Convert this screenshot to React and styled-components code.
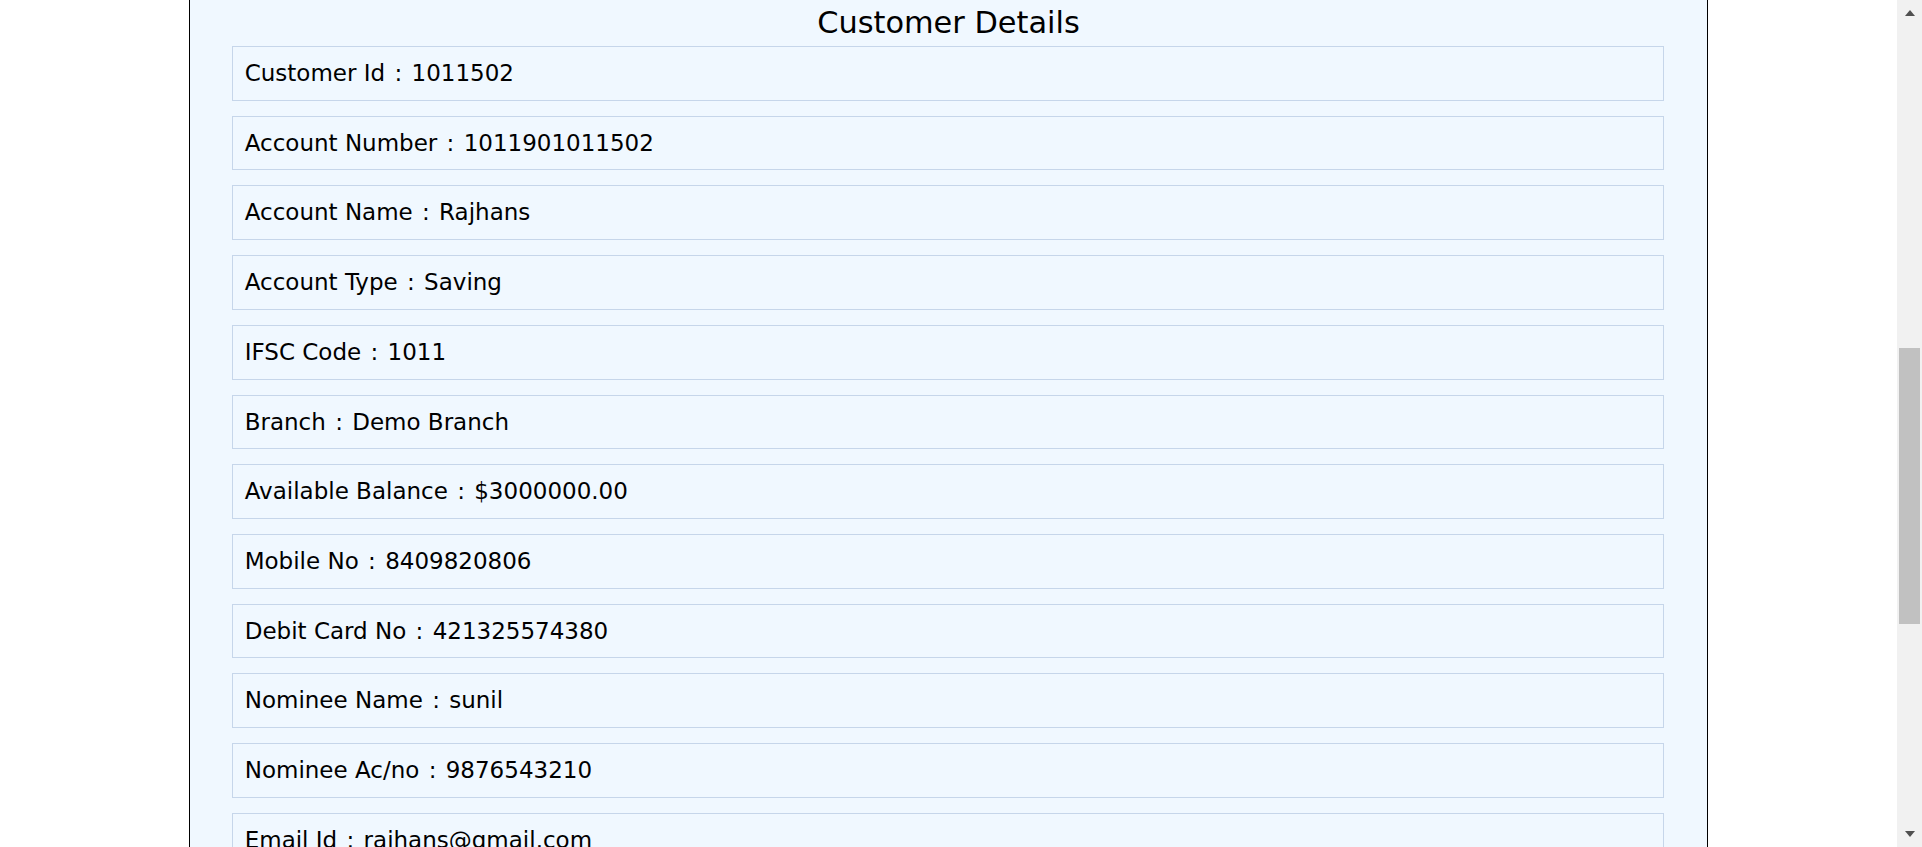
import React from 'react'
import styled, { createGlobalStyle } from 'styled-components';

const GlobalStyle=createGlobalStyle`
    body{
        margin:0;
        background:#fff;
        font-family:"DejaVu Sans", Verdana, sans-serif;
        color:#000;
    }
`;

const details=[
    {label:'Customer Id',value:'1011502'},
    {label:'Account Number',value:'1011901011502'},
    {label:'Account Name',value:'Rajhans'},
    {label:'Account Type',value:'Saving'},
    {label:'IFSC Code',value:'1011'},
    {label:'Branch',value:'Demo Branch'},
    {label:'Available Balance',value:'$3000000.00'},
    {label:'Mobile No',value:'8409820806'},
    {label:'Debit Card No',value:'421325574380'},
    {label:'Nominee Name',value:'sunil'},
    {label:'Nominee Ac/no',value:'9876543210'},
    {label:'Email Id',value:'rajhans@gmail.com'},
];

function App() {
  return (
    <PageStyled>
        <GlobalStyle/>
        <main className='page-content'>
            <DetailsStyled>
                <h2>Customer Details</h2>
                <div className='details-list'>
                    {details.map((item)=>{
                        const {label,value}=item;
                        return <DetailRow key={label}>{label} <span className='sep'>:</span> {value}</DetailRow>
                    })}
                </div>
            </DetailsStyled>
        </main>
        <ScrollBar>
            <ScrollArrow direction='up'/>
            <div className='track'>
                <div className='thumb'/>
            </div>
            <ScrollArrow direction='down'/>
        </ScrollBar>
    </PageStyled>
  )
}

const PageStyled=styled.div`
    display:flex;
    height:100vh;
    overflow:hidden;
    .page-content{
        flex:1;
        min-width:0;
        overflow:hidden;
    }
`;

const DetailsStyled=styled.div`
    width:80%;
    margin:0 auto;
    background:#f0f8ff;
    border-left:1px solid #000;
    border-right:1px solid #000;
    padding-bottom:20px;
    h2{
        margin:0 0 5px;
        padding-top:5px;
        font-size:30.4px;
        font-weight:400;
        line-height:36px;
        text-align:center;
    }
    .details-list{
        display:flex;
        flex-direction:column;
        gap:15px;
        padding:0 43px 0 42px;
    }
`;

const DetailRow=styled.div`
    border:1px solid #c6d6ea;
    padding:13px 12px;
    font-size:23px;
    line-height:26.7px;
    .sep{
        margin:0 2px;
    }
`;

const ScrollBar=styled.div`
    width:25px;
    flex-shrink:0;
    display:flex;
    flex-direction:column;
    background:#f1f1f1;
    .track{
        flex:1;
        padding:0 2px;
    }
    .thumb{
        margin-top:323px;
        height:276px;
        background:#c1c1c1;
    }
`;

const ScrollArrow=styled.div`
    height:25px;
    display:flex;
    justify-content:center;
    align-items:${props=>props.direction==='up'?'flex-start':'flex-end'};
    padding:${props=>props.direction==='up'?'10px 0 0 1px':'0 0 10px 1px'};
    box-sizing:border-box;
    &::before{
        content:'';
        width:0;
        height:0;
        border-left:5.5px solid transparent;
        border-right:5.5px solid transparent;
        ${props=>props.direction==='up'
            ?'border-bottom:6px solid #505050;'
            :'border-top:6px solid #505050;'}
    }
`;

export default App
